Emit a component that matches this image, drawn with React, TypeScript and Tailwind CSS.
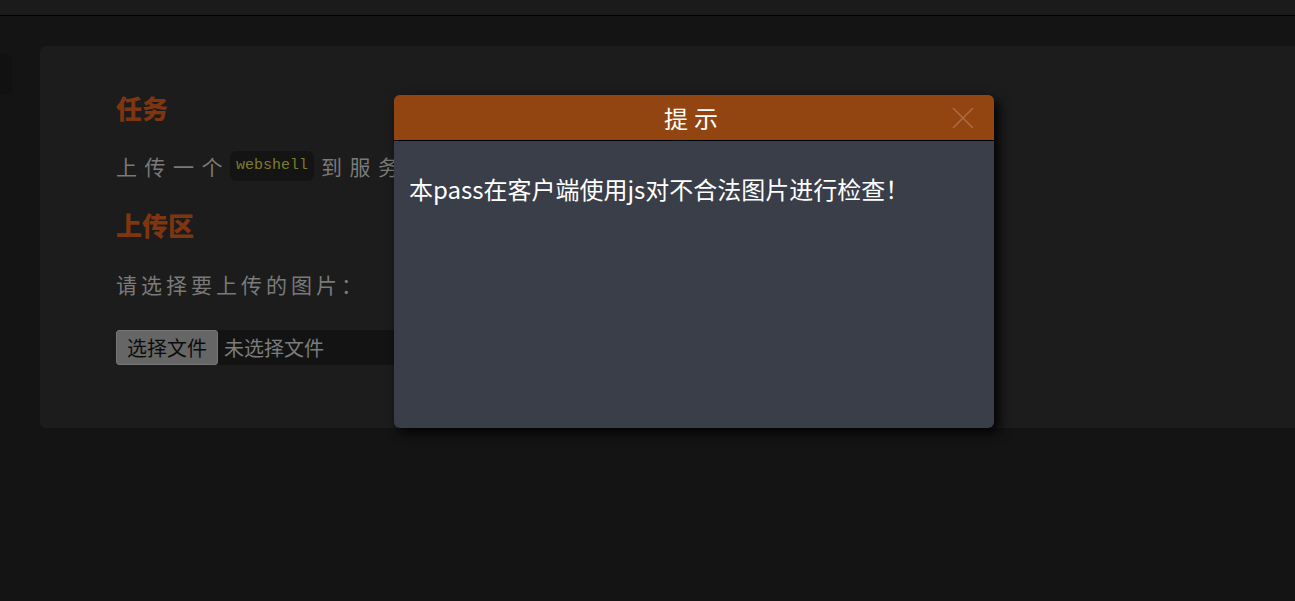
const cjk = "font-['Noto_Sans_CJK_SC','Noto_Sans',sans-serif]";

function FileInput() {
  return (
    <div className="mt-[31px] flex h-[35px] w-[320px] items-stretch bg-[#131313]">
      <button className="flex w-[102px] items-center justify-center rounded-[3px] border border-[#767676] bg-[#666] text-[20px] text-[#0c0c0c]">
        选择文件
      </button>
      <span className="flex items-center pl-[6px] text-[20px] text-[#7c7c7c]">未选择文件</span>
    </div>
  );
}

function Dialog() {
  return (
    <div className="absolute left-[394px] top-[95px] flex h-[333px] w-[600px] flex-col overflow-hidden rounded-[6px] bg-[#3a3e49] shadow-[5px_5px_12px_rgba(0,0,0,0.9)]">
      <div className="relative flex h-[46px] items-center justify-center border-b border-black bg-[#924510]">
        <span className="text-[24px] tracking-[6px] text-white">提示</span>
        <svg
          className="absolute right-[20px] top-[12px]"
          width="22"
          height="22"
          viewBox="0 0 22 22"
          stroke="#ad6c44"
          strokeWidth="1.5"
        >
          <path d="M1 1 L21 21 M21 1 L1 21" />
        </svg>
      </div>
      <p className="px-[15px] pt-[33px] text-[24px] leading-[30px] text-white">
        本pass在客户端使用js对不合法图片进行检查！
      </p>
    </div>
  );
}

export default function App() {
  return (
    <div className={`relative min-h-screen overflow-hidden bg-[#141414] ${cjk}`}>
      <div className="h-[16px] border-b border-black bg-[#1b1b1b]" />
      <div className="flex">
        <div className="mt-[38px] h-[41px] w-[12px] rounded-r-[6px] bg-[#111]" />
        <div className="-mr-5 ml-[28px] mt-[30px] flex h-[382px] flex-1 flex-col rounded-[6px] bg-[#1c1c1c] pl-[76px] pt-[44px]">
          <h2 className="text-[26px] font-black leading-[36px] text-[#7e3510]">任务</h2>
          <p className="mt-[25px] flex items-center text-[21px] leading-[30px] tracking-[7.5px] text-[#7a7a7a]">
            <span>上传一个</span>
            <code className="inline-block h-[30px] rounded-md bg-[#141414] px-[6px] font-['Liberation_Mono',monospace] text-[15px] leading-[30px] tracking-normal text-[#7c7c2c]">
              webshell
            </code>
            <span className="ml-[7px]">到服务器。</span>
          </p>
          <h2 className="mt-[26px] text-[26px] font-black leading-[36px] text-[#7e3510]">上传区</h2>
          <p className="mt-[26px] text-[21px] leading-[30px] tracking-[4px] text-[#7a7a7a]">请选择要上传的图片：</p>
          <FileInput />
        </div>
      </div>
      <Dialog />
    </div>
  );
}
